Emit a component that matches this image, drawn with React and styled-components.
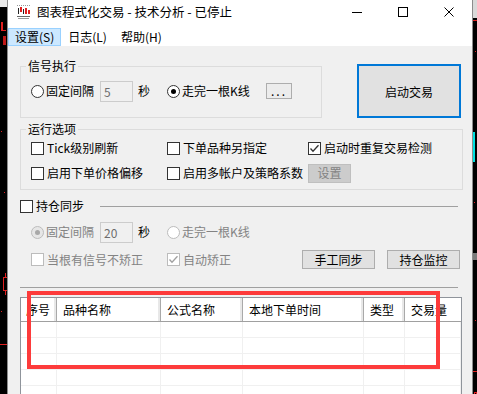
import React from "react";
import styled, { createGlobalStyle } from "styled-components";

const FONT = `"Noto Sans CJK SC", "Noto Sans", sans-serif`;

const GlobalStyle = createGlobalStyle`
  html, body {
    margin: 0;
    padding: 0;
    background: #000;
  }
  body {
    font-family: ${FONT};
    font-size: 12px;
    color: #000;
  }
`;

const Screen = styled.div`
  display: flex;
  height: 394px;
  overflow: hidden;
  background: #000;
`;

const Strip = styled.div`
  flex: 0 0 ${(p) => p.$w}px;
  display: flex;
  flex-direction: column;
  overflow: hidden;
`;

const Mark = styled.div`
  flex: none;
  margin-top: ${(p) => p.$mt || 0}px;
  margin-left: ${(p) => p.$ml || 0}px;
  width: ${(p) => p.$w}px;
  height: ${(p) => p.$h}px;
  background: ${(p) => p.$bg || "transparent"};
  border: ${(p) => (p.$outline ? `1px solid ${p.$outline}` : "none")};
  box-sizing: border-box;
`;

const Window = styled.div`
  flex: 0 0 466px;
  box-sizing: border-box;
  display: flex;
  flex-direction: column;
  background: #f0f0f0;
  border-left: 1px solid #8c8c8c;
  border-right: 1px solid #8c8c8c;
  overflow: hidden;
`;

const TitleBar = styled.div`
  height: 27px;
  box-sizing: border-box;
  padding-bottom: 3px;
  display: flex;
  align-items: center;
  background: #fff;
`;

const Logo = styled.svg`
  margin-left: 8px;
  flex: none;
`;

const TitleText = styled.span`
  margin-left: 6px;
  font-size: 12.5px;
  line-height: 16px;
  white-space: nowrap;
`;

const Controls = styled.div`
  margin-left: auto;
  display: flex;
`;

const ControlButton = styled.div`
  width: 46px;
  height: 24px;
  display: flex;
  align-items: center;
  justify-content: center;
`;

const MenuBar = styled.div`
  height: 19px;
  box-sizing: border-box;
  padding-top: 1px;
  display: flex;
  background: #fff;
`;

const MenuItem = styled.div`
  height: 18px;
  box-sizing: border-box;
  padding: 0 6px;
  border: 1px solid ${(p) => (p.$active ? "#99d1ff" : "transparent")};
  background: ${(p) => (p.$active ? "#cce8ff" : "transparent")};
  font-size: 12px;
  line-height: 16px;
  white-space: nowrap;
`;

const Client = styled.div`
  flex: 1;
  display: flex;
  flex-direction: column;
  padding: 13px 9px 0 12px;
  overflow: hidden;
`;

const TopRow = styled.div`
  display: flex;
  align-items: flex-start;
`;

const GroupBox = styled.fieldset`
  margin: ${(p) => p.$mt || 0}px 0 0 0;
  min-width: 0;
  width: ${(p) => p.$w}px;
  box-sizing: border-box;
  border: 1px solid #dcdcdc;
  padding: ${(p) => p.$pad};
`;

const Legend = styled.legend`
  margin-left: -5px;
  padding: 0 2px;
  font-size: 12px;
  line-height: 14px;
`;

const StartButton = styled.button`
  margin: 5px 0 0 35px;
  width: 104px;
  height: 54px;
  box-sizing: border-box;
  border: 2px solid #0078d7;
  background: #e1e1e1;
  font-family: ${FONT};
  font-size: 12px;
  color: #000;
  padding: 0;
`;

const Row = styled.div`
  display: flex;
  align-items: center;
  height: ${(p) => p.$h || 20}px;
  margin-top: ${(p) => p.$mt || 0}px;
  padding-left: ${(p) => p.$pl || 0}px;
`;

const Option = styled.div`
  display: flex;
  align-items: center;
  gap: ${(p) => p.$gap ?? 3}px;
  width: ${(p) => (p.$w ? `${p.$w}px` : "auto")};
  flex: none;
  margin-left: ${(p) => p.$ml || 0}px;
  color: ${(p) => (p.$disabled ? "#838383" : "#000")};
  font-size: 12px;
  line-height: 14px;
  white-space: nowrap;
`;

const Box = styled.span`
  width: 13px;
  height: 13px;
  box-sizing: border-box;
  flex: none;
  display: inline-flex;
  align-items: center;
  justify-content: center;
  border: 1px solid ${(p) => (p.$disabled ? "#bcbcbc" : "#333")};
  background: #fff;
`;

const Circle = styled.span`
  width: 13px;
  height: 13px;
  box-sizing: border-box;
  flex: none;
  border-radius: 50%;
  display: inline-flex;
  align-items: center;
  justify-content: center;
  border: 1px solid ${(p) => (p.$disabled ? "#bcbcbc" : "#333")};
  background: ${(p) => (p.$disabled && p.$checked ? "#e6e6e6" : "#fff")};

  &::after {
    content: "";
    display: ${(p) => (p.$checked ? "block" : "none")};
    width: 5px;
    height: 5px;
    border-radius: 50%;
    background: ${(p) => (p.$disabled ? "#a8a8a8" : "#000")};
  }
`;

const NumberInput = styled.div`
  width: 33px;
  height: 21px;
  box-sizing: border-box;
  flex: none;
  margin-left: ${(p) => p.$ml || 0}px;
  border: 1px solid #cccccc;
  background: #f0f0f0;
  color: #6d6d6d;
  padding-left: 3px;
  font-size: 12px;
  line-height: 19px;
`;

const Unit = styled.span`
  margin-left: 5px;
  font-size: 12px;
  line-height: 14px;
  flex: none;
`;

const SmallButton = styled.div`
  width: ${(p) => p.$w}px;
  height: ${(p) => p.$h}px;
  box-sizing: border-box;
  flex: none;
  margin-left: ${(p) => p.$ml || 0}px;
  display: flex;
  align-items: center;
  justify-content: center;
  border: 1px solid ${(p) => (p.$disabled ? "#bfbfbf" : "#adadad")};
  background: ${(p) => p.$bg || "#e1e1e1"};
  color: ${(p) => (p.$disabled ? "#838383" : "#000")};
  font-size: 12px;
  line-height: 14px;
  letter-spacing: ${(p) => (p.$dots ? "2px" : "0")};
`;

const OptionsGrid = styled.div`
  display: grid;
  grid-template-columns: 136px 141px auto;
  grid-auto-rows: 20px;
  row-gap: 5px;
  align-items: center;
`;

const SyncLine = styled.div`
  flex: 1;
  height: 1px;
  margin: 0 5px 0 16px;
  background: #a0a0a0;
`;

const Separator = styled.div`
  height: 1px;
  margin: 18px 5px 0 0;
  background: #a0a0a0;
  flex: none;
`;

const Table = styled.div`
  position: relative;
  flex: none;
  height: 140px;
  margin: 9px 1px 0 0;
  border: 1px solid #8f949b;
  background: #fff;
`;

const COLS = "36px 104px 82px 121px 41px 1fr";

const HeaderRow = styled.div`
  display: grid;
  grid-template-columns: ${COLS};
  height: 24px;
  box-sizing: border-box;
  border-bottom: 1px solid #a0a0a0;
  overflow: hidden;
`;

const HeaderCell = styled.div`
  padding-left: ${(p) => p.$pl ?? 6}px;
  border-right: ${(p) => (p.$last ? "none" : "1px solid #a9a9a9")};
  box-shadow: ${(p) => (p.$last ? "none" : "inset -2px 0 0 #e8e8e8")};
  font-size: 12px;
  line-height: 23px;
  white-space: nowrap;
  overflow: hidden;
`;

const BodyRow = styled.div`
  display: grid;
  grid-template-columns: ${COLS};
  height: 16px;
  box-sizing: border-box;
  border-bottom: 1px solid #f0f0f0;
`;

const BodyCell = styled.div`
  border-right: 1px solid #f0f0f0;
`;

const Highlight = styled.div`
  position: absolute;
  left: 6px;
  top: -7px;
  width: 413px;
  height: 78px;
  box-sizing: border-box;
  border: 4px solid #fd3b3b;
  pointer-events: none;
`;

const Check = ({ color = "#333" }) => (
  <svg width="11" height="11" viewBox="0 0 11 11">
    <polyline points="1.5,5.5 4,8.2 9.5,2.2" fill="none" stroke={color} strokeWidth="1.3" />
  </svg>
);

const CheckOption = ({ label, checked, disabled, w, ml }) => (
  <Option $w={w} $ml={ml} $disabled={disabled}>
    <Box $disabled={disabled}>{checked && <Check color={disabled ? "#a0a0a0" : "#333"} />}</Box>
    {label}
  </Option>
);

const RadioOption = ({ label, checked, disabled, w, ml }) => (
  <Option $w={w} $ml={ml} $gap={2} $disabled={disabled}>
    <Circle $checked={checked} $disabled={disabled} />
    {label}
  </Option>
);

const columns = ["序号", "品种名称", "公式名称", "本地下单时间", "类型", "交易量"];

export default function App() {
  return (
    <>
      <GlobalStyle />
      <Screen>
        <Strip $w={7}>
          <Mark $w={7} $h={7} $bg="#e9e9e9" />
          <Mark $mt={15} $ml={1} $w={2} $h={8} $bg="#e02020" />
          <Mark $ml={1} $w={5} $h={1} $bg="#e02020" />
          <Mark $mt={5} $ml={3} $w={3} $h={9} $bg="#c01818" />
          <Mark $mt={86} $ml={1} $w={1} $h={1} $bg="#e02020" />
          <Mark $mt={60} $ml={4} $w={1} $h={1} $bg="#e02020" />
          <Mark $mt={80} $ml={5} $w={1} $h={4} $bg="#e02020" />
          <Mark $ml={3} $w={5} $h={14} $outline="#e02020" />
          <Mark $ml={5} $w={1} $h={4} $bg="#e02020" />
          <Mark $mt={16} $ml={1} $w={1} $h={1} $bg="#e02020" />
          <Mark $mt={32} $w={7} $h={1} $bg="#e02020" />
        </Strip>
        <Window>
          <TitleBar>
            <Logo width="15" height="16" viewBox="0 0 15 16">
              <line x1="1" y1="1.5" x2="14" y2="1.5" stroke="#9a9a9a" strokeDasharray="1 1" />
              <rect x="2" y="4" width="1" height="6" fill="#222" />
              <rect x="4" y="3" width="2" height="5" fill="#e02020" />
              <rect x="7" y="5" width="1" height="5" fill="#222" />
              <rect x="9" y="4" width="2" height="6" fill="#e02020" />
              <rect x="12" y="6" width="2" height="4" fill="#e02020" />
              <rect x="1" y="12" width="13" height="1" fill="#6a6a6a" />
              <rect x="2" y="14" width="11" height="1" fill="#9a9a9a" />
            </Logo>
            <TitleText>图表程式化交易 - 技术分析 - 已停止</TitleText>
            <Controls>
              <ControlButton>
                <svg width="10" height="10" viewBox="0 0 10 10">
                  <rect x="0" y="5" width="10" height="1" fill="#000" />
                </svg>
              </ControlButton>
              <ControlButton>
                <svg width="10" height="10" viewBox="0 0 10 10">
                  <rect x="0.5" y="0.5" width="9" height="9" fill="none" stroke="#000" />
                </svg>
              </ControlButton>
              <ControlButton>
                <svg width="10" height="10" viewBox="0 0 10 10">
                  <path d="M0.5 0.5 L9.5 9.5 M9.5 0.5 L0.5 9.5" stroke="#000" strokeWidth="1" />
                </svg>
              </ControlButton>
            </Controls>
          </TitleBar>
          <MenuBar>
            <MenuItem $active>设置(S)</MenuItem>
            <MenuItem>日志(L)</MenuItem>
            <MenuItem>帮助(H)</MenuItem>
          </MenuBar>
          <Client>
            <TopRow>
              <GroupBox $w={302} $pad="8px 10px 16px">
                <Legend>信号执行</Legend>
                <Row>
                  <RadioOption label="固定间隔" w={69} />
                  <NumberInput>5</NumberInput>
                  <Unit>秒</Unit>
                  <RadioOption label="走完一根K线" checked w={99} ml={17} />
                  <SmallButton $w={26} $h={16} $bg="#ececec" $dots>...</SmallButton>
                </Row>
              </GroupBox>
              <StartButton>启动交易</StartButton>
            </TopRow>
            <GroupBox $w={443} $mt={4} $pad="2px 10px 6px">
              <Legend>运行选项</Legend>
              <OptionsGrid>
                <CheckOption label="Tick级别刷新" />
                <CheckOption label="下单品种另指定" />
                <CheckOption label="启动时重复交易检测" checked />
                <CheckOption label="启用下单价格偏移" />
                <CheckOption label="启用多帐户及策略系数" />
                <SmallButton $w={43} $h={19} $bg="#cccccc" $disabled>
                  设置
                </SmallButton>
              </OptionsGrid>
            </GroupBox>
            <Row $h={14} $mt={9}>
              <CheckOption label="持仓同步" />
              <SyncLine />
            </Row>
            <Row $mt={9} $pl={11}>
              <RadioOption label="固定间隔" checked disabled w={69} />
              <NumberInput>20</NumberInput>
              <Unit>秒</Unit>
              <RadioOption label="走完一根K线" disabled ml={17} />
            </Row>
            <Row $h={19} $mt={8} $pl={11}>
              <CheckOption label="当根有信号不矫正" disabled w={136} />
              <CheckOption label="自动矫正" checked disabled w={135} />
              <SmallButton $w={73} $h={19}>手工同步</SmallButton>
              <SmallButton $w={73} $h={19} $ml={12}>
                持仓监控
              </SmallButton>
            </Row>
            <Separator />
            <Table>
              <HeaderRow>
                {columns.map((c, i) => (
                  <HeaderCell key={c} $last={i === columns.length - 1} $pl={i === 0 ? 5 : 6}>
                    {c}
                  </HeaderCell>
                ))}
              </HeaderRow>
              {[0, 1, 2, 3, 4, 5].map((r) => (
                <BodyRow key={r}>
                  {columns.map((c) => (
                    <BodyCell key={c} />
                  ))}
                </BodyRow>
              ))}
              <Highlight />
            </Table>
          </Client>
        </Window>
        <Strip $w={4}>
          <Mark $w={4} $h={18} $bg="#d9d9d9" />
          <Mark $mt={2} $w={4} $h={1} $bg="#e02020" />
          <Mark $mt={30} $ml={2} $w={1} $h={1} $bg="#e02020" />
          <Mark $mt={80} $w={2} $h={30} $bg="#00e0e0" />
          <Mark $mt={40} $ml={1} $w={1} $h={1} $bg="#e02020" />
          <Mark $mt={50} $w={4} $h={7} $bg="#7a7a7a" />
          <Mark $mt={60} $ml={2} $w={1} $h={1} $bg="#e02020" />
          <Mark $mt={50} $w={4} $h={1} $bg="#e02020" />
          <Mark $mt={20} $ml={1} $w={3} $h={12} $outline="#e02020" />
        </Strip>
      </Screen>
    </>
  );
}
